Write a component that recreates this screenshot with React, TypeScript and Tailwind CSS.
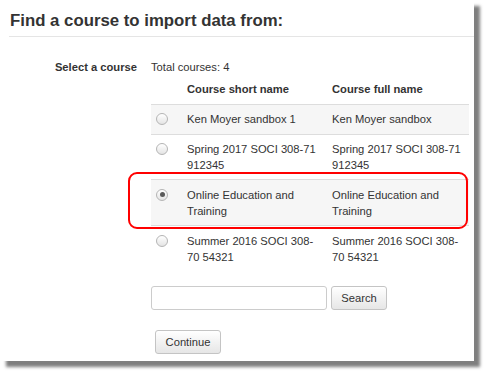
import React from "react";

type Course = {
  short: string;
  full: string;
  selected?: boolean;
  shaded?: boolean;
};

const courses: Course[] = [
  { short: "Ken Moyer sandbox 1", full: "Ken Moyer sandbox", shaded: true },
  { short: "Spring 2017 SOCI 308-71 912345", full: "Spring 2017 SOCI 308-71 912345" },
  { short: "Online Education and Training", full: "Online Education and Training", selected: true, shaded: true },
  { short: "Summer 2016 SOCI 308-70 54321", full: "Summer 2016 SOCI 308-70 54321" },
];

const Radio = ({ checked }: { checked?: boolean }) => (
  <span className="flex h-[16px] items-center">
    <span className="flex h-[12px] w-[12px] items-center justify-center rounded-full border border-[#b5b5b5] bg-gradient-to-b from-[#ffffff] to-[#e4e4e4]">
      {checked && <span className="h-[5px] w-[5px] rounded-full bg-[#5a5a5a]" />}
    </span>
  </span>
);

const Button = ({ label, width }: { label: string; width: string }) => (
  <button
    className={`h-[24px] ${width} rounded-[3px] border border-[#c4c4c4] bg-gradient-to-b from-[#ffffff] to-[#e6e6e6] text-[11.2px] leading-[16px] text-[#333]`}
  >
    {label}
  </button>
);

export default function App() {
  return (
    <div className="h-[373px] w-[487px] bg-white font-['Liberation_Sans',Arial,sans-serif] text-[#333]">
      <div className="relative h-[361px] w-[474px] bg-white pl-[9px] shadow-[6px_6px_3px_rgba(0,0,0,0.5)]">
        {/* heading */}
        <h2 className="border-b border-[#e5e5e5] pb-[5px] pl-[1px] pt-[11px] text-[16.8px] font-bold leading-[20px]">
          Find a course to import data from:
        </h2>

        <div className="mt-[22px] flex gap-[14px] text-[11.2px] leading-[16px]">
          <div className="w-[128px] text-right font-bold">Select a course</div>

          <div className="w-[318px]">
            <div>Total courses: 4</div>
            <table className="w-[318px] table-fixed border-collapse">
              <colgroup>
                <col className="w-[28px]" />
                <col className="w-[145px]" />
                <col className="w-[145px]" />
              </colgroup>
              <thead>
                <tr className="border-b border-[#dddddd]">
                  <th />
                  <th className="px-[8px] py-[6.4px] text-left font-bold">Course short name</th>
                  <th className="px-[8px] py-[6.4px] text-left font-bold">Course full name</th>
                </tr>
              </thead>
              <tbody>
                {courses.map((c) => (
                  <tr
                    key={c.short}
                    className={`border-t border-[#dddddd] ${c.shaded ? "bg-[#f6f6f6]" : "bg-white"}`}
                  >
                    <td className="py-[6.4px] pl-[5px] align-top">
                      <Radio checked={c.selected} />
                    </td>
                    <td className="px-[8px] py-[6.4px] align-top">{c.short}</td>
                    <td className="px-[8px] py-[6.4px] align-top">{c.full}</td>
                  </tr>
                ))}
              </tbody>
            </table>

            <div className="mt-[15px] flex gap-[4px]">
              <input className="h-[24px] w-[176px] rounded-[3px] border border-[#cccccc] bg-white" />
              <Button label="Search" width="w-[56px]" />
            </div>

            <div className="ml-[4px] mt-[20px]">
              <Button label="Continue" width="w-[66px]" />
            </div>
          </div>
        </div>

        {/* highlight around the selected course */}
        <div className="pointer-events-none absolute left-[128px] top-[172px] h-[57px] w-[340px] rounded-[9px] border-2 border-[#ff0000]" />
      </div>
    </div>
  );
}
